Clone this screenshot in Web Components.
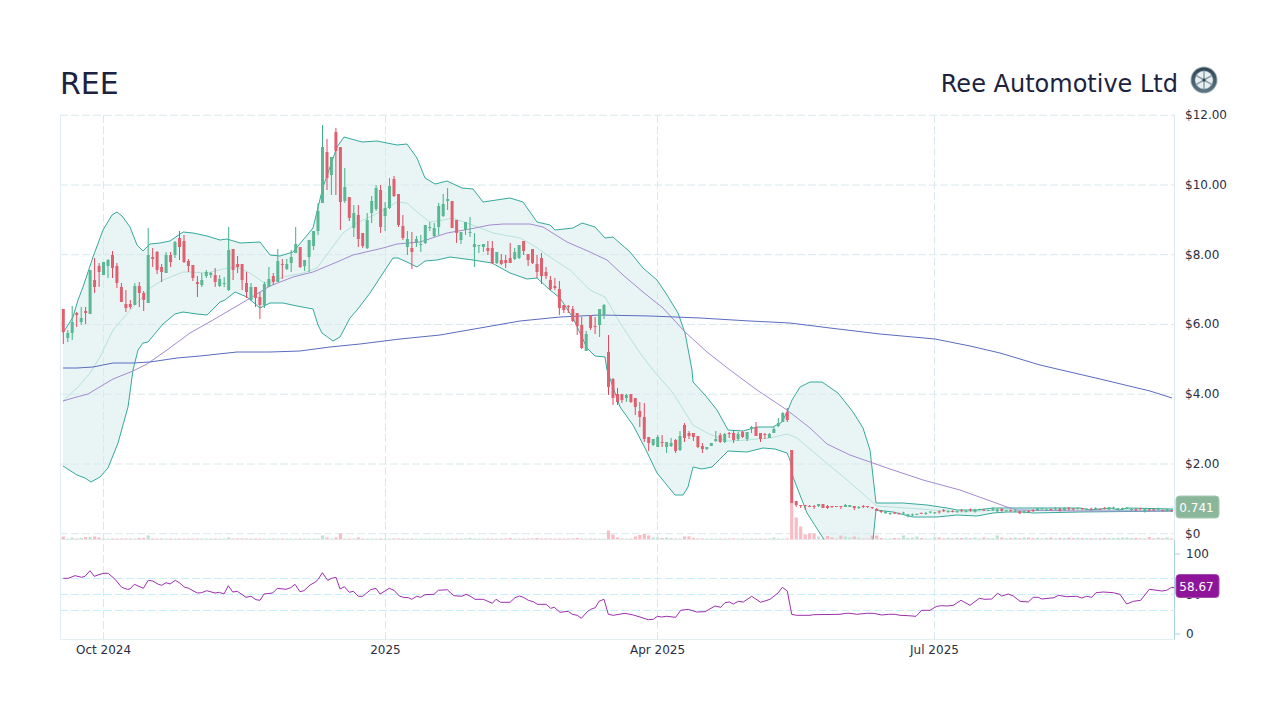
<!DOCTYPE html>
<html lang="en">
<head>
<meta charset="utf-8">
<title>REE</title>
<style>
  body { margin: 0; background: #fff; font-family: "DejaVu Sans", sans-serif; }
</style>
</head>
<body>
<stock-page>
  <stock-header symbol="REE" name="Ree Automotive Ltd"></stock-header>
  <price-chart></price-chart>
</stock-page>

<script>
class StockPage extends HTMLElement {
  constructor() {
    super();
    this.shadowDOM = this.attachShadow({ mode: "open" });
  }

  connectedCallback() {
    this.shadowDOM.innerHTML = `
      <style>
        :host { display: flex; flex-direction: column; width: 1280px; height: 720px; background: #fff; }
      </style>
      <slot></slot>`;
  }
}

class WheelLogo extends HTMLElement {
  constructor() {
    super();
    this.shadowDOM = this.attachShadow({ mode: "open" });
  }

  connectedCallback() {
    let petals = "";
    for (let a = 0; a < 360; a += 60) {
      petals += `<path d="M14 12.4 L10.4 6.4 Q14 4.2 17.6 6.4 Z" transform="rotate(${a + 30} 14 14)" fill="#e9eef1"/>`;
    }
    this.shadowDOM.innerHTML = `
      <style>
        :host { display: block; width: 28px; height: 28px; margin-bottom: 6px; }
        svg { display: block; }
      </style>
      <svg width="28" height="28" viewBox="0 0 28 28">
        <defs>
          <linearGradient id="tire" x1="0" y1="0" x2="0" y2="1">
            <stop offset="0" stop-color="#2f4653"/>
            <stop offset="1" stop-color="#5d7683"/>
          </linearGradient>
        </defs>
        <circle cx="14" cy="14" r="13.5" fill="#a3b1b8"/>
        <circle cx="14" cy="14" r="12.6" fill="url(#tire)"/>
        <circle cx="14" cy="14" r="9.4" fill="#8b9fa9"/>
        ${petals}
        <circle cx="14" cy="14" r="1.6" fill="#2f4653"/>
      </svg>`;
  }
}

class StockHeader extends HTMLElement {
  constructor() {
    super();
    this.shadowDOM = this.attachShadow({ mode: "open" });
  }

  connectedCallback() {
    this.shadowDOM.innerHTML = `
      <style>
        :host {
          display: flex;
          justify-content: space-between;
          align-items: center;
          height: 42px;
          padding: 62px 62px 1px 60px;
          color: #1c2340;
          font-family: "DejaVu Sans", sans-serif;
        }
        #symbol { font-size: 30px; }
        #company { display: flex; align-items: center; gap: 12px; }
        #name { font-size: 24px; padding-top: 1px; }
      </style>
      <div id="symbol">${this.getAttribute("symbol")}</div>
      <div id="company">
        <div id="name">${this.getAttribute("name")}</div>
        <wheel-logo></wheel-logo>
      </div>`;
  }
}

// pixel traces of the series, in page coordinates
const UPPER = [[63,333],[73,317],[78,300],[83,287],[93,257],[103,230],[112,215],[117,212],[122,216],[130,227],[137,245],[143,251],[150,244],[160,243],[170,241],[183,232],[193,233],[207,236],[220,240],[227,239],[240,243],[260,242],[270,255],[280,256],[293,252],[313,228],[323,187],[337,147],[344,137],[362,142],[377,141],[397,145],[407,144],[417,158],[425,178],[435,184],[447,181],[462,188],[473,189],[483,202],[510,198],[523,202],[537,222],[550,225],[555,230],[573,228],[582,223],[595,227],[605,238],[613,237],[630,252],[643,268],[657,280],[667,295],[678,313],[685,333],[692,370],[693,382],[705,395],[717,410],[728,430],[743,431],[757,427],[773,427],[782,422],[788,410],[792,400],[800,387],[810,382],[822,382],[838,393],[853,412],[863,428],[870,450],[876,503],[903,503],[927,505],[947,508],[957,510],[977,510],[993,508],[1007,508],[1080,508],[1090,510],[1110,508],[1120,510],[1127,508],[1173,509]];
const LOWER = [[63,466],[77,475],[85,478],[91,482],[100,477],[108,468],[118,443],[128,407],[133,370],[138,350],[143,343],[148,342],[163,324],[175,314],[183,312],[197,314],[207,315],[220,302],[225,300],[235,292],[247,297],[260,308],[270,303],[283,303],[297,306],[313,309],[318,325],[322,333],[333,341],[340,337],[350,318],[357,310],[370,293],[385,270],[393,258],[398,258],[407,262],[417,267],[425,261],[437,260],[450,257],[473,260],[492,263],[510,273],[527,279],[537,278],[550,290],[560,298],[573,318],[587,348],[595,356],[605,357],[607,370],[620,407],[633,425],[645,448],[657,473],[675,495],[683,495],[688,487],[693,467],[702,469],[712,467],[728,451],[747,452],[763,448],[775,449],[787,453],[790,460],[793,477],[807,513],[823,538],[840,565],[868,565],[873,540],[876,510],[893,512],[913,517],[937,517],[957,515],[977,516],[993,513],[1007,512],[1023,512],[1033,513],[1080,512],[1173,511]];
const MIDDLE = [[63,401],[78,387],[90,373],[100,357],[113,330],[132,308],[140,300],[150,288],[163,280],[183,272],[190,272],[207,273],[223,269],[237,267],[250,273],[263,282],[270,283],[283,277],[303,273],[317,268],[328,253],[343,233],[357,223],[380,212],[397,202],[407,203],[417,212],[430,222],[443,220],[452,218],[467,223],[483,229],[493,233],[520,238],[533,245],[547,255],[570,270],[590,290],[605,297],[620,323],[640,353],[653,370],[673,393],[693,425],[707,433],[727,441],[747,440],[770,438],[787,434],[797,438],[823,460],[847,480],[877,506],[920,509],[960,512],[1000,510],[1173,510]];
const SMA50 = [[63,401],[73,398],[88,394],[103,385],[113,379],[133,371],[147,364],[167,350],[190,333],[213,320],[230,310],[247,300],[270,286],[293,277],[313,272],[337,262],[353,255],[383,248],[397,244],[420,242],[447,233],[470,229],[490,225],[503,224],[523,224],[530,224],[543,227],[567,242],[590,252],[607,260],[623,275],[643,292],[663,308],[685,332],[707,352],[730,370],[757,390],[787,410],[810,428],[827,444],[850,455],[890,469],[923,480],[960,490],[1007,507],[1017,510],[1080,511],[1173,511]];
const SMA200 = [[63,368],[77,368],[93,367],[113,363],[133,363],[150,362],[177,358],[200,356],[237,352],[270,352],[300,351],[330,347],[360,344],[400,339],[440,335],[480,328],[520,321],[560,317],[600,315],[650,316],[700,318],[750,321],[790,323],[830,328],[880,334],[935,339],[970,346],[1000,353],[1040,365],[1100,379],[1150,391],[1172,398]];

const RSI_A = [40,145,55,145,75,137,95,142,105,139,120,122,133,139,150,133,162,130,175,130,195,148,215,172,232,178,240,177,253,163,280,175,295,151,308,153,325,163,335,166,348,158,360,162,376,151,388,158,403,171,416,175,442,189,455,188,470,182,495,189,508,187,522,192,535,167,548,186,562,184,588,202,603,199,618,209,630,211,642,192,668,189,682,175,708,178,722,173,735,163,750,185,762,182,780,165,795,157,805,148,817,128,833,151,845,145,858,142,870,177,883,170,898,187,910,184,925,199,938,199,962,179,978,175,990,192,1018,175,1032,181,1048,198,1060,202,1075,203,1085,208,1100,199,1112,202,1125,194,1152,193,1165,181,1192,179,1200,187];
const RSI_B = [12,197,35,199,48,193,60,198,75,208,100,208,127,220,138,208,152,217,180,217,195,203,208,198,220,202,235,211,250,215,262,223,288,223,302,235,313,232,330,247,355,244,367,253,382,256,394,265,412,245,422,238,436,233,447,214,462,208,475,253,490,256,525,250,550,255,570,261,595,269,610,268,622,259,635,261,650,259,677,262,692,241,715,238,740,246,765,245,795,228,812,232,825,218,838,216,850,222,865,214,880,216,905,199,932,217,960,208,985,188,997,172,1012,183,1025,253,1040,256,1080,256,1090,254,1170,253,1188,250,1200,250];
const RSI_C = [20,253,50,250,70,250,95,255,115,253,135,253,150,256,175,257,198,259,215,241,240,241,260,229,275,227,290,228,310,226,333,211,360,226,388,205,405,208,425,207,443,190,455,198,475,192,490,198,510,214,535,216,550,202,565,202,575,207,612,203,625,196,650,200,680,199,695,204,710,199,725,202,738,188,760,186,790,188,810,193,830,222,850,214,872,211,898,178,915,180,935,183,950,181,965,172,973,173];

// top, bottom of the body, top, bottom of the wick
const CANDLES = `r309,332,309,344 g333,338,330,342 g322,333,306,340 r313,315,312,327 g318,322,307,325 r311,313,307,324 g270,314,270,314 r280,287,258,293 r266,272,263,287 g262,275,262,275
g260,266,259,278 r255,268,251,278 r266,283,263,288 r287,302,283,302 r304,308,290,312 r304,307,300,309 g286,305,283,305 r286,293,282,307 r293,300,291,311 g255,303,228,303
r257,259,248,267 r252,270,251,274 r267,272,264,282 g255,273,252,273 r255,262,252,267 g242,255,241,258 r238,247,231,260 r241,262,235,263 r261,266,259,272 r265,278,265,281
r282,284,276,297 g280,285,273,287 g272,276,270,278 g273,275,272,278 r275,282,268,287 g279,286,275,287 g283,284,277,287 g250,290,227,291 r249,270,249,280 r264,267,256,273
r264,280,264,290 r283,292,272,298 g287,300,283,301 r287,298,287,307 r297,305,292,319 g284,305,282,308 g279,287,267,287 r276,282,273,285
g261,282,249,282 r264,265,259,279 g264,269,259,270 g257,263,250,272 g244,253,227,253 r247,267,247,268 g260,266,260,271 g240,257,240,272 g231,246,231,250 g211,231,203,235
g147,203,125,203 r152,178,139,190 g157,175,157,195 r132,151,128,195 r147,202,147,230 g187,201,168,203 r197,218,197,221 g213,228,205,237 r215,239,205,247 r233,246,233,248
g220,248,213,249 g201,213,196,223 g188,209,185,211 r190,227,185,233 g208,216,202,231 g186,208,178,209 r179,196,176,197 r194,225,194,227 r226,238,215,240 g239,247,231,255
r248,252,232,269 g239,243,236,247 g244,245,235,252 g225,243,225,244 g227,228,222,231 g228,236,223,237 g206,227,203,235 g204,216,194,217 g199,201,188,210 r201,228,201,228
r220,233,220,243 g232,240,232,244 g222,230,222,235 g232,233,217,237 g244,247,233,267 g245,246,245,253 g244,247,244,252 r248,251,241,255 r248,263,241,264 g252,263,252,264
r260,264,254,265 r260,263,255,268 r258,263,243,263 g252,259,248,260 g245,258,245,259 r241,251,241,255 r254,260,254,266 r249,263,249,264 r264,272,255,278
r258,276,253,284 r272,276,267,279 r280,289,276,290 r286,288,278,290 r289,308,281,315 r305,310,305,313 r306,307,305,313 r309,321,306,322 r313,326,313,335 r325,348,317,349
g334,351,331,351 r315,328,315,330 r326,327,317,334 g309,325,309,337 g305,315,304,319
r352,387,335,395 r379,398,378,405 r394,402,388,405 r394,400,394,403 g395,398,394,402 r394,402,394,403 r398,407,398,415 r411,417,402,427 r417,439,403,442 r437,443,437,451
g439,445,439,446 g437,447,435,447 r442,443,435,447 g442,447,442,453 g443,446,438,447 r440,451,439,453 g436,450,431,451 r425,438,423,442 r433,436,431,439 r433,437,433,441
r436,447,436,448 r446,449,443,453 g447,449,447,450 g443,446,443,446 g439,441,431,442 r435,442,433,443 g434,442,433,443 r433,434,432,438 r433,440,430,443 g434,439,432,441
r432,437,431,438 g432,439,432,441 g427,429,426,433 r427,436,422,436 r433,439,433,442 r434,435,433,439 g434,438,433,438 g429,433,427,433 g423,426,418,427 g413,422,412,422
r412,420,408,422 r450,503,450,503 r501,505,501,507 r505,506,505,508 r505,506,505,510 r506,507,505,507 r506,507,505,509 g504,506,504,507 r504,508,504,508 r506,508,505,509
r506,507,506,508 r506,507,506,507 r506,507,506,509 g505,507,504,507 g505,507,505,507 r506,508,506,510 g507,508,506,509 r506,507,505,508 r506,507,506,508 r507,508,507,509
r509,511,508,511 r511,512,510,513`.trim().split(/\s+/).map((c) => {
  const n = c.slice(1).split(",").map(Number);
  return { up: c[0] === "g", top: n[0], bottom: n[1], high: n[2], low: n[3] };
});

const TAIL_KNOTS = [[882,512],[903,513],[912,515],[925,513],[940,511],[1000,509],[1020,511],[1028,512],[1037,509],[1122,508],[1173,510]];

// volume heights that stand out from the small default bars
const VOLUMES = { 0:3,1:1,2:2,3:1,4:1.5,5:2.5,6:2.5,7:3,8:2,9:1,11:1,12:1,13:1,17:1.5,18:1.5,19:4,20:1,21:1,22:1,25:1,26:1,27:1,30:1,34:1,37:2,38:1,39:1,48:1,52:1,53:1,56:1,57:1,58:4,59:2,60:1,61:2,62:6,63:1,64:1,65:1,66:2,67:1,68:1,69:1,70:1,91:1.5,100:1.5,106:1.5,115:1.5,122:9,123:5,124:2,125:1,126:1,127:1,128:3,129:4.5,130:5.5,131:4,132:2,133:2,134:1.5,135:2,136:1.5,137:1,138:1,139:3,140:3,141:1.5,159:2,163:37,164:22,165:13,166:5,167:6,168:6,169:3,170:1,171:3.5,172:2,173:1,174:4,175:3,176:2,177:3,178:2,181:4,182:4,183:1.5,188:4,191:3,209:4,243:2.5 };

function seeded(seed) {
  let s = seed;
  return () => {
    s = (s * 16807) % 2147483647;
    return s / 2147483647;
  };
}

function knotY(knots, x) {
  for (let i = 1; i < knots.length; i++) {
    if (x <= knots[i][0]) {
      const [x0, y0] = knots[i - 1];
      const [x1, y1] = knots[i];
      return y0 + ((y1 - y0) * Math.max(0, x - x0)) / (x1 - x0);
    }
  }
  return knots[knots.length - 1][1];
}

const toPoints = (pts) => pts.map((p) => p.join(",")).join(" ");

class PriceChart extends HTMLElement {
  constructor() {
    super();
    this.shadowDOM = this.attachShadow({ mode: "open" });
  }

  connectedCallback() {
    this.render();
  }

  candleData() {
    const rnd = seeded(77);
    const all = CANDLES.slice();
    for (let i = all.length; i <= 248; i++) {
      const y = knotY(TAIL_KNOTS, 63.3 + i * 4.469) + (rnd() - 0.5) * 1.6;
      const h = rnd() < 0.3 ? 2 : 1;
      all.push({ up: rnd() < 0.55, top: y, bottom: y + h, high: y - rnd() * 1.2, low: y + h + rnd() * 1.2 });
    }
    return all;
  }

  rsiPoints() {
    const a = [];
    for (let i = 0; i < RSI_A.length; i += 2) a.push([50 + RSI_A[i] / 3, 530 + RSI_A[i + 1] / 3]);
    for (let i = 0; i < RSI_B.length; i += 2) a.push([450 + RSI_B[i] / 3, 530 + RSI_B[i + 1] / 3]);
    for (let i = 0; i < RSI_C.length; i += 2) a.push([850 + RSI_C[i] / 3, 530 + RSI_C[i + 1] / 3]);
    return a.map((p) => [+p[0].toFixed(1), +p[1].toFixed(1)]);
  }

  render() {
    const candles = this.candleData();
    const rnd = seeded(31);
    let volumes = "";
    let wicks = "";
    let bodies = "";
    candles.forEach((c, i) => {
      const x = 63.3 + i * 4.469;
      const h = VOLUMES[i] || (i > 183 ? 1 + rnd() * 1.2 : 1);
      volumes += `<rect x="${(x - 1.6).toFixed(1)}" y="${539.5 - h}" width="3.2" height="${h}" fill="${c.up ? "#c0e3d3" : "#f8bcc4"}"/>`;
      const color = c.up ? "#3fb285" : "#e5475f";
      wicks += `<line x1="${x.toFixed(1)}" x2="${x.toFixed(1)}" y1="${c.high}" y2="${c.low}" stroke="${color}"/>`;
      bodies += `<rect x="${(x - 1.5).toFixed(1)}" y="${c.top}" width="3" height="${Math.max(c.bottom - c.top, 1)}" fill="${c.up ? "#5ab794" : "#e0606f"}"/>`;
    });

    const band = toPoints(UPPER) + " " + toPoints(LOWER.slice().reverse());
    const priceLabels = [["$12.00", 115], ["$10.00", 184.8], ["$8.00", 254.5], ["$6.00", 324.3], ["$4.00", 394], ["$2.00", 463.8], ["$0", 533.5]];
    const months = [["Oct 2024", 103.5], ["2025", 385.5], ["Apr 2025", 657.5], ["Jul 2025", 934.5]];

    this.shadowDOM.innerHTML = `
      <style>
        :host { display: block; height: 555px; }
        svg { display: block; font-family: "DejaVu Sans", sans-serif; font-size: 12px; }
        .grid { stroke: #d9e8ec; stroke-dasharray: 8 3; fill: none; }
        .rsi-grid { stroke: #c9eefb; stroke-dasharray: 8 3; }
        .axis { fill: #2a2e45; dominant-baseline: central; }
        .line { fill: none; stroke-width: 1; stroke-linejoin: round; }
        .badge { fill: #fff; text-anchor: middle; dominant-baseline: central; }
      </style>
      <svg width="1280" height="555" viewBox="0 105 1280 555">
        <defs>
          <clipPath id="main"><rect x="60" y="115" width="1115" height="424.5"/></clipPath>
        </defs>
        <polygon points="${band}" fill="#e9f5f5" clip-path="url(#main)"/>
        ${months.map((m) => `<line class="grid" x1="${m[1]}" x2="${m[1]}" y1="115" y2="640"/>`).join("")}
        ${priceLabels.map((p) => `<line class="grid" x1="60" x2="1175" y1="${p[1] + 0.2}" y2="${p[1] + 0.2}"/>`).join("")}
        <line x1="60.5" x2="60.5" y1="115" y2="640" stroke="#dfeef3"/>
        <line x1="1174.5" x2="1174.5" y1="115" y2="539" stroke="#dbeaef"/>
        <line x1="1174.5" x2="1174.5" y1="539" y2="640" stroke="#a9d1de"/>
        <line x1="60" x2="1175" y1="539.5" y2="539.5" stroke="#e4eef0"/>
        <line x1="60" x2="1175" y1="639.5" y2="639.5" stroke="#e4eef0"/>
        <line x1="1175" x2="1180" y1="554" y2="554" stroke="#a9d1de"/>
        <line x1="1175" x2="1180" y1="634" y2="634" stroke="#a9d1de"/>

        <g clip-path="url(#main)">
          <g>${volumes}</g>
          <polyline class="line" points="${toPoints(MIDDLE)}" stroke="#b5e2da"/>
          <polyline class="line" points="${toPoints(UPPER)}" stroke="#35a99c"/>
          <polyline class="line" points="${toPoints(LOWER)}" stroke="#35a99c"/>
          <polyline class="line" points="${toPoints(SMA50)}" stroke="#a48ad0"/>
          <polyline class="line" points="${toPoints(SMA200)}" stroke="#5a6cc0"/>
          <g>${wicks}</g>
          <g>${bodies}</g>
        </g>

        <line class="rsi-grid" x1="60" x2="1175" y1="578.5" y2="578.5"/>
        <line class="rsi-grid" x1="60" x2="1175" y1="594.5" y2="594.5"/>
        <line class="rsi-grid" x1="60" x2="1175" y1="610.5" y2="610.5"/>
        <polyline class="line" points="${toPoints(this.rsiPoints())}" stroke="#9c2fad"/>

        ${priceLabels.map((p) => `<text class="axis" x="1185" y="${p[1]}">${p[0]}</text>`).join("")}
        <text class="axis" x="1186" y="553.5">100</text>
        <text class="axis" x="1186" y="594.5">50</text>
        <text class="axis" x="1186" y="633.5">0</text>
        ${months.map((m) => `<text class="axis" x="${m[1]}" y="649.5" text-anchor="middle">${m[0]}</text>`).join("")}

        <rect x="1176" y="496" width="43" height="22" rx="3.5" fill="#8ab79a" stroke="#a5c9b1"/>
        <text class="badge" x="1196.5" y="507.5">0.741</text>
        <rect x="1176" y="574.5" width="43" height="23" rx="3.5" fill="#8e1599" stroke="#a44bae"/>
        <text class="badge" x="1196.5" y="586.5">58.67</text>
      </svg>`;
  }
}

customElements.define("stock-page", StockPage);
customElements.define("wheel-logo", WheelLogo);
customElements.define("stock-header", StockHeader);
customElements.define("price-chart", PriceChart);
</script>
</body>
</html>
